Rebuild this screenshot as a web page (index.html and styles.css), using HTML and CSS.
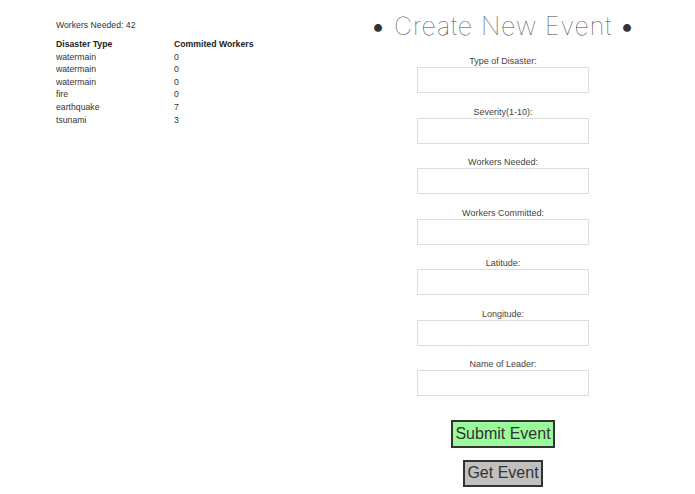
FILE: index.html
```html
<!DOCTYPE html>
<html>
<head>
<meta charset="utf-8">
<link rel="stylesheet" href="styles.css">
</head>
<body>
<div class="page">
  <section class="events">
    <p class="needed">Workers Needed: 42</p>
    <table class="list">
      <thead>
        <tr><th>Disaster Type</th><th>Commited Workers</th></tr>
      </thead>
      <tbody>
        <tr><td>watermain</td><td>0</td></tr>
        <tr><td>watermain</td><td>0</td></tr>
        <tr><td>watermain</td><td>0</td></tr>
        <tr><td>fire</td><td>0</td></tr>
        <tr><td>earthquake</td><td>7</td></tr>
        <tr><td>tsunami</td><td>3</td></tr>
      </tbody>
    </table>
  </section>
  <section class="create">
    <h1 class="title"><span class="dot">•</span> Create New Event <span class="dot">•</span></h1>
    <form class="form">
      <label class="field"><span>Type of Disaster:</span><input type="text"></label>
      <label class="field"><span>Severity(1-10):</span><input type="text"></label>
      <label class="field"><span>Workers Needed:</span><input type="text"></label>
      <label class="field"><span>Workers Committed:</span><input type="text"></label>
      <label class="field"><span>Latitude:</span><input type="text"></label>
      <label class="field"><span>Longitude:</span><input type="text"></label>
      <label class="field"><span>Name of Leader:</span><input type="text"></label>
      <div class="actions">
        <button type="button" class="btn submit">Submit Event</button>
        <button type="button" class="btn get">Get Event</button>
      </div>
    </form>
  </section>
</div>
</body>
</html>
```
FILE: styles.css
```css
html, body {
  margin: 0;
  padding: 0;
  background: #fff;
}
body {
  font-family: "Liberation Sans", Arial, sans-serif;
  color: #333;
  font-size: 8.7px;
}
.page {
  display: flex;
  width: 695px;
  height: 494px;
  overflow: hidden;
}
.events {
  width: 304px;
  padding: 19px 0 0 56px;
}
.needed {
  margin: 0 0 7px 0;
  line-height: 12px;
}
.list {
  border-collapse: collapse;
}
.list th, .list td {
  padding: 0;
  text-align: left;
  line-height: 12.6px;
  width: 118px;
}
.list th {
  font-weight: bold;
  color: #222;
}
.create {
  width: 286px;
  display: flex;
  flex-direction: column;
  align-items: center;
}
.title {
  margin: 11px 0 0 0;
  white-space: nowrap;
  font-family: "Inter", "Lato", sans-serif;
  font-weight: 100;
  font-size: 25px;
  letter-spacing: 0.9px;
  line-height: 30px;
  color: #444;
}
.title .dot {
  font-weight: 400;
  color: #333;
}
.form {
  display: flex;
  flex-direction: column;
  align-items: center;
  margin-top: 14px;
}
.field {
  display: flex;
  flex-direction: column;
  align-items: center;
  margin-bottom: 12.5px;
}
.field span {
  font-size: 9px;
  line-height: 12px;
  color: #444;
}
.field input {
  box-sizing: border-box;
  width: 172px;
  height: 26px;
  border: 1px solid #ddd;
  margin: 0;
  padding: 0;
  background: #fff;
}
.actions {
  display: flex;
  flex-direction: column;
  align-items: center;
  gap: 12px;
  margin-top: 11.5px;
}
.btn {
  font-family: "Liberation Sans", Arial, sans-serif;
  font-size: 16px;
  color: #333;
  border: 2px solid #333;
  padding: 0 2px;
  height: 27.5px;
  margin: 0;
}
.submit {
  background: #99fa99;
}
.get {
  background: #c0c0c0;
}
```
